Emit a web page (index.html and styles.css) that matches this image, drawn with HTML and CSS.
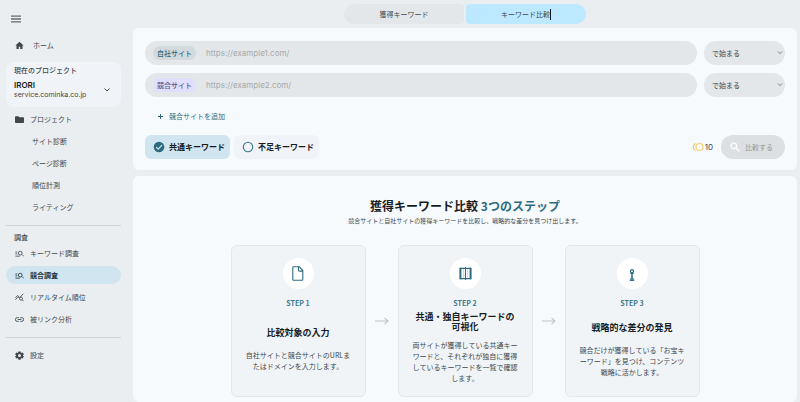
FILE: index.html
```html
<!DOCTYPE html>
<html lang="ja">
<head>
<meta charset="utf-8">
<meta name="viewport" content="width=device-width, initial-scale=1">
<title>キーワード比較</title>
<link rel="stylesheet" href="styles.css">
</head>
<body>
<div class="app">
  <aside class="sidebar">
    <button class="menu-button" type="button" aria-label="メニュー">
      <svg width="10" height="8" viewBox="0 0 10 8"><path d="M0 1.200h10M0 4h10M0 6.800h10" fill="none" stroke="currentColor" stroke-width="1.300"/></svg>
    </button>
    <a class="nav-link nav-link--home" href="#">
      <svg class="nav-icon" viewBox="0 0 24 24"><path fill="currentColor" d="M10 21v-6h4v6h6v-9h3L12 2 1 12h3v9z"/></svg>
      ホーム
    </a>
    <button class="project" type="button">
      <span class="project-text">
        <span class="project-label">現在のプロジェクト</span>
        <span class="project-name">IRORI</span>
        <span class="project-url">service.cominka.co.jp</span>
      </span>
      <svg width="6" height="4" viewBox="0 0 6 4"><path d="M.5.5 3 3 5.500.5" fill="none" stroke="currentColor"/></svg>
    </button>
    <nav class="nav-main">
      <a class="nav-link" href="#">
        <svg class="nav-icon" viewBox="0 0 24 24"><path fill="currentColor" d="M9 3H2C1 3 0 4 0 5v14c0 1 1 2 2 2h20c1 0 2-1 2-2V8c0-1-1-2-2-2H12z"/></svg>
        プロジェクト
      </a>
      <a class="nav-link nav-link--child" href="#">サイト診断</a>
      <a class="nav-link nav-link--child" href="#">ページ診断</a>
      <a class="nav-link nav-link--child" href="#">順位計測</a>
      <a class="nav-link nav-link--child" href="#">ライティング</a>
    </nav>
    <nav class="nav-section">
      <h2 class="nav-heading">調査</h2>
      <a class="nav-link" href="#">
        <svg class="nav-icon" viewBox="0 0 24 24"><path fill="none" stroke="currentColor" stroke-width="2.200" d="M1 8h5M1 13h5M1 19h12M19 15l5 5"/><circle cx="14" cy="11" r="5" fill="none" stroke="currentColor" stroke-width="2.200"/></svg>
        キーワード調査
      </a>
      <a class="nav-link nav-link--active" href="#" aria-current="page">
        <svg class="nav-icon" viewBox="0 0 24 24"><path fill="none" stroke="currentColor" stroke-width="2.200" d="M1 8h5M1 13h5M1 19h12M19 15l5 5"/><circle cx="14" cy="11" r="5" fill="none" stroke="currentColor" stroke-width="2.200"/></svg>
        競合調査
      </a>
      <a class="nav-link" href="#">
        <svg class="nav-icon" viewBox="0 0 24 24"><path fill="none" stroke="currentColor" stroke-width="2.200" d="M1 18l7-8 4 3 10-11M19 18l4 4M1 12l6-5 4 3"/><circle cx="16" cy="15" r="4" fill="none" stroke="currentColor" stroke-width="2.200"/></svg>
        リアルタイム順位
      </a>
      <a class="nav-link" href="#">
        <svg class="nav-icon" viewBox="0 0 24 24"><path fill="none" stroke="currentColor" stroke-width="2.400" d="M10 7H6a5 5 0 0 0 0 10h4M14 7h4a5 5 0 0 1 0 10h-4M7 12h10"/></svg>
        被リンク分析
      </a>
    </nav>
    <nav class="nav-section nav-section--settings">
      <a class="nav-link" href="#">
        <svg class="nav-icon" viewBox="0 0 24 24"><path fill="currentColor" fill-rule="evenodd" d="M9 1h6l.6 3.200 2 1.200 3.100-1.100 3 5.200-2.500 2.100v1l2.500 2.100-3 5.200-3.100-1.100-2 1.200L15 23H9l-.6-3.200-2-1.200-3.100 1.100-3-5.200 2.500-2.100v-1L.3 9.300l3-5.200 3.100 1.100 2-1.200zM12 8a4 4 0 1 0 0 8 4 4 0 0 0 0-8z"/></svg>
        設定
      </a>
    </nav>
  </aside>

  <main class="main">
    <div class="tabs">
      <button class="tab" type="button">獲得キーワード</button>
      <button class="tab tab--active" type="button">キーワード比較<span class="caret"></span></button>
    </div>

    <form class="panel search">
      <div class="site-row">
        <div class="field">
          <label class="badge" for="own-site">自社サイト</label>
          <input class="field-input" id="own-site" type="text" placeholder="https://example1.com/">
        </div>
        <div class="match">
          <select class="match-select" aria-label="自社サイトの一致条件"><option>で始まる</option></select>
          <svg class="match-arrow" viewBox="0 0 6 4"><path d="M1 .5l2 2 2-2" fill="none" stroke="currentColor" stroke-width=".8"/></svg>
        </div>
      </div>
      <div class="site-row">
        <div class="field">
          <label class="badge badge--rival" for="rival-site">競合サイト</label>
          <input class="field-input" id="rival-site" type="text" placeholder="https://example2.com/">
        </div>
        <div class="match">
          <select class="match-select" aria-label="競合サイトの一致条件"><option>で始まる</option></select>
          <svg class="match-arrow" viewBox="0 0 6 4"><path d="M1 .5l2 2 2-2" fill="none" stroke="currentColor" stroke-width=".8"/></svg>
        </div>
      </div>
      <button class="add-button" type="button">
        <svg width="5" height="5" viewBox="0 0 5 5"><path d="M2.500 0v5M0 2.500h5" stroke="currentColor" fill="none"/></svg>
        競合サイトを追加
      </button>
      <div class="actions">
        <button class="choice choice--active" type="button" aria-pressed="true">
          <svg width="12" height="12" viewBox="0 0 12 12"><circle cx="6" cy="6" r="5.300" fill="#2f6b80"/><path d="M3.200 6.100l2 2 3.700-4" fill="none" stroke="#d3e6f0" stroke-width="1.200"/></svg>
          共通キーワード
        </button>
        <button class="choice" type="button" aria-pressed="false">
          <svg width="12" height="12" viewBox="0 0 12 12"><circle cx="6" cy="6" r="4.700" fill="none" stroke="#3d788d" stroke-width="1.100"/></svg>
          不足キーワード
        </button>
        <span class="cost">
          <svg width="12" height="10" viewBox="0 0 12 10"><circle cx="7.500" cy="5" r="3.500" fill="none" stroke="#f8cf70" stroke-width="1.200"/><path d="M3.400 1.200a4.600 4.600 0 0 0 0 7.600" fill="none" stroke="#f8cf70" stroke-width="1.200"/></svg>
          10
        </span>
        <button class="submit" type="submit" disabled>
          <svg width="10" height="10" viewBox="0 0 10 10"><circle cx="3.800" cy="3.800" r="2.800" fill="none" stroke="#fff" stroke-width="1.200"/><path d="M5.900 5.900l3.300 3.300" stroke="#fff" stroke-width="1.400"/></svg>
          比較する
        </button>
      </div>
    </form>

    <section class="panel guide">
      <h1 class="guide-title">獲得キーワード比較 <span class="accent">3つのステップ</span></h1>
      <p class="guide-lead">競合サイトと自社サイトの獲得キーワードを比較し、戦略的な差分を見つけ出します。</p>
      <div class="steps">
        <article class="step">
          <span class="step-icon">
            <svg width="12" height="15" viewBox="0 0 12 15"><path d="M1.500.7h5.700l3.600 3.800v9.100c0 .4-.3.700-.7.700H1.500c-.4 0-.7-.3-.7-.7V1.400c0-.4.300-.7.700-.7zM6.500.9v3.200c0 .7.400 1 1 1h3.200" fill="none" stroke="currentColor" stroke-width="1.100" stroke-linejoin="round"/></svg>
          </span>
          <p class="step-number">STEP 1</p>
          <div class="step-body">
            <h2 class="step-title">比較対象の入力</h2>
            <p class="step-text">自社サイトと競合サイトのURLまたはドメインを入力します。</p>
          </div>
        </article>
        <svg class="arrow" viewBox="0 0 14 8"><path d="M0 4h13M9.500.8 13 4 9.500 7.200" fill="none" stroke="currentColor" stroke-width="1.100"/></svg>
        <article class="step step--long">
          <span class="step-icon">
            <svg width="13" height="13" viewBox="0 0 13 13"><path d="M1.500 1.300h10v10.400h-10z" fill="none" stroke="currentColor" stroke-width="1.200"/><path d="M1.400.8v11.400M11.600.8v11.400" stroke="currentColor" stroke-width="1.900"/><path d="M4.600 1v11M8.400 1v11" stroke="currentColor" stroke-width=".5" opacity=".5"/><path d="M6.500 0v13" stroke="currentColor"/></svg>
          </span>
          <p class="step-number">STEP 2</p>
          <div class="step-body">
            <h2 class="step-title">共通・独自キーワードの可視化</h2>
            <p class="step-text">両サイトが獲得している共通キーワードと、それぞれが独自に獲得しているキーワードを一覧で確認します。</p>
          </div>
        </article>
        <svg class="arrow" viewBox="0 0 14 8"><path d="M0 4h13M9.500.8 13 4 9.500 7.200" fill="none" stroke="currentColor" stroke-width="1.100"/></svg>
        <article class="step">
          <span class="step-icon step-icon--low">
            <svg width="6" height="12" viewBox="0 0 6 12"><circle cx="3" cy="2.200" r="1.500" fill="none" stroke="currentColor" stroke-width="1.300"/><path d="M3 3.500v6.500" stroke="currentColor" stroke-width="1.500"/><path d="M1.300 4.500h3.400M1.500 9.300h3" stroke="currentColor" stroke-width=".9"/><path d="M.8 11.100h4.400" stroke="currentColor" stroke-width="1.700"/></svg>
          </span>
          <p class="step-number">STEP 3</p>
          <div class="step-body">
            <h2 class="step-title">戦略的な差分の発見</h2>
            <p class="step-text">競合だけが獲得している「お宝キーワード」を見つけ、コンテンツ戦略に活かします。</p>
          </div>
        </article>
      </div>
    </section>
  </main>
</div>
</body>
</html>
```
FILE: styles.css
```css
* {
  box-sizing: border-box;
}

body {
  margin: 0;
  background: #eaeef1;
  color: #40484c;
  font-family: "Noto Sans CJK JP", sans-serif;
  font-size: 7px;
  line-height: 10px;
}

h1, h2, p {
  margin: 0;
}

button, input, select {
  margin: 0;
  padding: 0;
  border: 0;
  background: none;
  color: inherit;
  font: inherit;
}

svg {
  display: block;
  flex: none;
}

a {
  color: inherit;
  text-decoration: none;
}

.app {
  display: flex;
  height: 100vh;
  overflow: hidden;
}

/* Sidebar */

.sidebar {
  flex: none;
  width: 133px;
  padding: 14px 12px 0 6px;
}

.menu-button {
  display: block;
  padding: 1px 5px;
  color: #656a6d;
}

.nav-link {
  display: flex;
  align-items: center;
  gap: 6px;
  height: 18px;
  margin: 4px 0;
  padding: 0 9px;
  border-radius: 9px;
}

.nav-link--home {
  gap: 9px;
  margin: 12px 0 8px;
}

.nav-link--child {
  padding-left: 26px;
}

.nav-link--active {
  background: #d1e5f0;
  color: #1e333c;
  font-weight: 700;
}

.nav-icon {
  width: 9px;
  height: 9px;
}

.project {
  display: flex;
  align-items: center;
  justify-content: space-between;
  width: 100%;
  padding: 3px 11px 7px 8px;
  border-radius: 8px;
  background: #f0f4f8;
  text-align: left;
}

.project-text {
  display: grid;
}

.project svg {
  margin-top: 14px;
}

.project-label {
  margin-bottom: 5px;
  font-weight: 500;
}

.project-name {
  color: #171c1f;
  font-family: Inter, sans-serif;
  font-size: 8px;
  font-weight: 600;
}

.project-url {
  font-family: Inter, sans-serif;
}

.nav-main .nav-link:first-child {
  margin-top: 3px;
}

.nav-section {
  margin-top: 9px;
  padding-top: 7px;
  border-top: 1px solid #cfd4d8;
}

.nav-heading {
  padding-left: 8px;
  font-size: 7px;
  font-weight: 500;
  line-height: 8px;
}

.nav-section .nav-heading + .nav-link {
  margin-top: 3px;
}

.nav-section--settings .nav-link {
  margin: 1px 0;
}

/* Main area */

.main {
  display: flex;
  flex: 1;
  flex-direction: column;
  min-width: 0;
  padding: 4px 3px 0 0;
}

.tabs {
  display: flex;
  justify-content: center;
  gap: 2px;
  margin-bottom: 4px;
}

.tab {
  display: flex;
  align-items: center;
  justify-content: center;
  width: 120px;
  height: 20px;
  border-radius: 10px 4px 4px 10px;
  background: #e3e7e9;
}

.tab--active {
  border-radius: 4px 10px 10px 4px;
  background: #bce9ff;
}

.caret {
  width: 1px;
  height: 11px;
  background: #171c1f;
}

.panel {
  border-radius: 6px;
  background: #f6fafd;
}

.search {
  display: grid;
  gap: 8px;
  padding: 13px 12px 11px;
}

.site-row {
  display: flex;
  gap: 7px;
}

.field {
  display: flex;
  flex: 1;
  align-items: center;
  gap: 10px;
  height: 24px;
  padding: 0 8px;
  border-radius: 12px;
  background: #e3e7e9;
}

.badge {
  padding: 2px 4px;
  border-radius: 7px;
  background: #d3dadd;
  color: #2f6b80;
  font-weight: 500;
}

.badge--rival {
  background: #e0dfff;
  color: #5d5b7d;
}

.field-input {
  flex: 1;
  min-width: 0;
  height: 24px;
  outline: 0;
  font-family: Inter, sans-serif;
  font-size: 8px;
}

.field-input::placeholder {
  color: #a4a9ac;
  opacity: 1;
}

.match {
  position: relative;
  width: 81px;
}

.match-select {
  width: 100%;
  height: 24px;
  padding: 0 8px;
  border-radius: 12px;
  background: #e3e7e9;
  appearance: none;
}

.match-arrow {
  position: absolute;
  top: 10px;
  right: 2px;
  width: 6px;
  height: 4px;
  color: #656a6d;
  pointer-events: none;
}

.add-button {
  display: flex;
  align-items: center;
  justify-self: start;
  gap: 6px;
  height: 22px;
  padding: 0 13px;
  color: #2f6b80;
}

.actions {
  display: flex;
  align-items: center;
  gap: 4px;
}

.choice {
  display: flex;
  align-items: center;
  gap: 4px;
  width: 85px;
  height: 24px;
  padding: 0 8px;
  border-radius: 6px;
  background: #f0f4f8;
  color: #171c1f;
  font-size: 8px;
  font-weight: 700;
  white-space: nowrap;
}

.choice--active {
  background: #d1e5f0;
}

.cost {
  display: flex;
  align-items: center;
  gap: 1px;
  margin-left: auto;
  margin-right: 4px;
  font-family: Inter, sans-serif;
  font-size: 8px;
}

.submit {
  display: flex;
  align-items: center;
  gap: 5px;
  width: 64px;
  height: 24px;
  padding: 0 9px;
  border-radius: 12px;
  background: #dce0e2;
  color: #95999c;
}

/* Steps guide */

.guide {
  flex: 1;
  margin-top: 6px;
  padding-top: 22px;
  text-align: center;
}

.guide-title {
  color: #171c1f;
  font-size: 12px;
  font-weight: 700;
  line-height: 16px;
}

.accent {
  color: #2f6b80;
}

.guide-lead {
  margin-top: 2px;
  font-size: 6px;
}

.steps {
  display: flex;
  align-items: center;
  justify-content: center;
  gap: 9px;
  margin-top: 19px;
}

.step {
  display: flex;
  flex-direction: column;
  align-items: center;
  width: 135px;
  min-height: 152px;
  padding: 12px 14px 4px;
  border: 1px solid #e3e7e9;
  border-radius: 6px;
  background: #f0f4f7;
}

.step--long {
  padding-bottom: 8px;
}

.step-icon {
  display: grid;
  place-items: center;
  width: 31px;
  height: 31px;
  border-radius: 50%;
  background: #fff;
  color: #2f6b80;
}

.step-icon--low {
  padding-top: 3px;
}

.step-number {
  margin-top: 9px;
  color: #3d788d;
  font-weight: 700;
}

.step-body {
  display: flex;
  flex: 1;
  flex-direction: column;
  justify-content: center;
  gap: 12px;
}

.step--long .step-body {
  gap: 8px;
}

.step-title {
  color: #171c1f;
  font-size: 9px;
  font-weight: 700;
  line-height: 10px;
}

.step-text {
  line-height: 11px;
}

.arrow {
  width: 14px;
  height: 8px;
  color: #c0c4c7;
}
```
